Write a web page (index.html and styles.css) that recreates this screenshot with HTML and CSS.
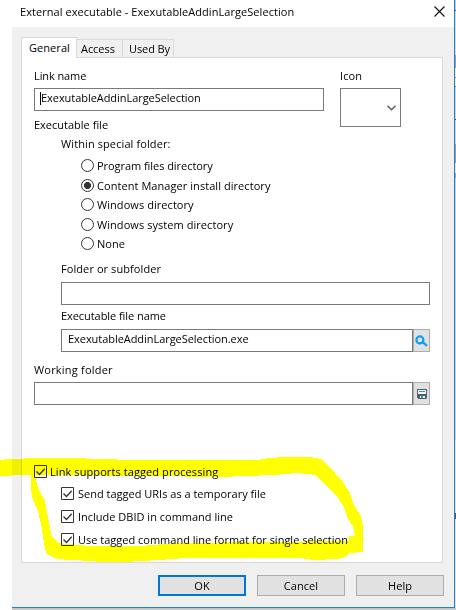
FILE: index.html
```html
<!DOCTYPE html>
<html lang="en">
<head>
<meta charset="utf-8">
<title>External executable</title>
<link rel="stylesheet" href="styles.css">
</head>
<body>
<div class="desktop">
  <main class="dialog">
    <header class="titlebar">
      <h1 class="title">External executable - ExexutableAddinLargeSelection</h1>
      <svg class="close" width="11" height="11" viewBox="0 0 11 11"><path d="M.5 .5l10 10M10.5 .5l-10 10"/></svg>
    </header>
    <div class="client">
      <nav class="tabs">
        <span class="tab tab-active">General</span>
        <span class="tab tab-access">Access</span>
        <span class="tab tab-used">Used By</span>
      </nav>
      <section class="panel">
        <div class="top-row">
          <div class="name-group">
            <div class="label">Link name</div>
            <div class="field"><span class="caret"></span><span class="value">ExexutableAddinLargeSelection</span></div>
          </div>
          <div class="icon-group">
            <div class="label">Icon</div>
            <div class="combo"><svg width="9" height="6" viewBox="0 0 9 6"><path d="M.5 .8l4 4 4-4"/></svg></div>
          </div>
        </div>
        <div class="label executable">Executable file</div>
        <div class="indent">
          <div class="label within">Within special folder:</div>
          <div class="radios">
            <div class="option tight"><i class="radio"></i><span>Program files directory</span></div>
            <div class="option"><i class="radio checked"></i><span>Content Manager install directory</span></div>
            <div class="option"><i class="radio"></i><span>Windows directory</span></div>
            <div class="option"><i class="radio"></i><span>Windows system directory</span></div>
            <div class="option"><i class="radio"></i><span>None</span></div>
          </div>
          <div class="label subfolder">Folder or subfolder</div>
          <div class="field"></div>
          <div class="label filename">Executable file name</div>
          <div class="field-row">
            <div class="field"><span class="value">ExexutableAddinLargeSelection.exe</span></div>
            <div class="browse"><svg width="13" height="12" viewBox="0 0 13 12"><circle class="lens" cx="4.9" cy="4.9" r="3.5"/><path class="handle" d="M7 7l2.2 1.4 2.8 2.4"/></svg></div>
          </div>
        </div>
        <div class="label working">Working folder</div>
        <div class="field-row">
          <div class="field"></div>
          <div class="browse"><svg width="10" height="10" viewBox="0 0 10 10"><path fill="#555c62" d="M0 0h10v9.5H9V10H1V9H0z"/><path fill="#f4f4f4" d="M1 1h8v4H1zM3 7h5v2H3z"/><path fill="#14a0dc" d="M2 2h6v1H2zM4 7h2v2H4z"/></svg></div>
        </div>
        <div class="checks">
          <div class="check main"><svg class="box" width="13" height="13" viewBox="0 0 13 13"><path d="M.5 .5h12v12H.5z"/><path class="tick" d="M2.5 6.5l3 3 5.2-5.8"/></svg><span>Link supports tagged processing</span></div>
          <div class="check"><svg class="box" width="13" height="13" viewBox="0 0 13 13"><path d="M.5 .5h12v12H.5z"/><path class="tick" d="M2.5 6.5l3 3 5.2-5.8"/></svg><span>Send tagged URIs as a temporary file</span></div>
          <div class="check"><svg class="box" width="13" height="13" viewBox="0 0 13 13"><path d="M.5 .5h12v12H.5z"/><path class="tick" d="M2.5 6.5l3 3 5.2-5.8"/></svg><span>Include DBID in command line</span></div>
          <div class="check"><svg class="box" width="13" height="13" viewBox="0 0 13 13"><path d="M.5 .5h12v12H.5z"/><path class="tick" d="M2.5 6.5l3 3 5.2-5.8"/></svg><span>Use tagged command line format for single selection</span></div>
        </div>
      </section>
      <footer class="actions">
        <div class="button default">OK</div>
        <div class="button">Cancel</div>
        <div class="button">Help</div>
      </footer>
    </div>
  </main>
  <svg class="marker" width="456" height="610" viewBox="0 0 456 610" shape-rendering="crispEdges">
    <path d="M0 460L8 459 24 459 24 458 87 458 87 459 118 459 118 460 257 460 269 458 284 457 310 457 321 459 335 473 343 482 350 493 354 505 361 516 363 527 363 552 350 553 345 557 338 559 314 560 300 558 185 558 160 560 124 562 96 562 96 561 67 560 54 558 46 553 44 543 42 529 38 511 33 500 31 490 31 475 24 475 0 476zM35 475L38 488 45 501 48 518 52 537 58 543 90 546 139 546 180 543 349 541 349 536 355 536 353 526 348 519 344 507 338 498 325 485 316 475 308 474 298 473 274 475 220 477 150 476 47 475z"/>
  </svg>
</div>
</body>
</html>
```
FILE: styles.css
```css
* { box-sizing: border-box; }
body {
  margin: 0;
  background: #fff;
  color: #000;
  font: 11px/16px "Open Sans", "Noto Sans", sans-serif;
  letter-spacing: .06px;
}
.desktop {
  position: relative;
  width: 456px;
  height: 610px;
  padding: 0 1px 2px 12px;
  overflow: hidden;
  background:
    linear-gradient(#fff, #fff) 0 0 / 12px 610px no-repeat,
    linear-gradient(#bdbdbd, #d4d4d4) 12px 608px / 444px 2px no-repeat,
    linear-gradient(#b0cfe8 0 10px, #45617b 10px 11px, #c8e0f3 11px 55px, #8b9fb2 55px 68px, #e4eff8 68px 77px, #708ca3 77px 78px, #e4eff8 78px 86px, #708ca3 86px 87px, #bfd9ed 87px 119px, #384d60 119px 120px, #bfd9ed 120px 144px, #8ca0b0 144px 163px, #e0edf7 163px 173px, #62b2e3 173px 178px, #b9d5ea 178px 440px, #d9e7f2 440px 513px, #4c5862 513px 519px, #d9e7f2 519px) 455px 0 / 1px 608px no-repeat;
}
.dialog {
  height: 608px;
  border-right: 1px solid #1883d7;
  border-bottom: 1px solid #1883d7;
  background: #f0f0f0;
}
.titlebar {
  display: flex;
  justify-content: space-between;
  height: 27px;
  padding: 4px 9px 0 8px;
  background: #fff;
}
.title { margin: 0; font-size: 11px; line-height: 16px; font-weight: 400; white-space: nowrap; }
.close { margin-top: 2px; fill: none; stroke: #111; stroke-width: 1.1; }
.client { padding: 10px 9px 0; }
.tabs { display: flex; align-items: flex-end; height: 20px; }
.tab { height: 18px; border: 1px solid #d9d9d9; border-bottom: 0; white-space: nowrap; }
.tab-active {
  z-index: 1;
  width: 56px;
  height: 21px;
  margin-bottom: -1px;
  padding: 2px 0 0 7px;
  background: #fff;
}
.tab-access { width: 45px; padding: 1px 0 0 4px; border-left: 0; border-right: 0; letter-spacing: -.05px; }
.tab-used { width: 52px; padding: 1px 0 0 6px; letter-spacing: -.1px; }
.panel {
  width: 422px;
  height: 506px;
  padding: 10px 12px 0;
  border: 1px solid #d9d9d9;
  background: #fff;
}
.label { height: 16px; white-space: nowrap; }
.top-row { display: flex; gap: 16px; height: 49px; }
.name-group { width: 290px; }
.name-group .label { letter-spacing: -.1px; }
.name-group .field, .combo { margin-top: 4px; }
.field {
  display: flex;
  flex: 1;
  height: 23px;
  padding: 1px 5px;
  border: 1px solid #7a7a7a;
  background: #fff;
}
.caret { width: 1px; height: 13px; margin-top: 2px; background: #000; }
.value { white-space: nowrap; letter-spacing: -.05px; }
.combo {
  display: flex;
  justify-content: flex-end;
  width: 61px;
  height: 39px;
  padding: 16px 4px 0 0;
  border: 1px solid #7a7a7a;
}
.combo svg { fill: none; stroke: #555; stroke-width: 1.3; }
.executable { letter-spacing: 0; }
.indent { padding-left: 27px; }
.indent > .field, .indent .field-row { width: 369px; }
.indent .value { padding-left: 1px; }
.within { margin-top: 3px; letter-spacing: .1px; }
.radios { display: grid; grid-template-rows: 20px 19px 20px 19px 19px; margin-top: 6px; padding-left: 20px; }
.option { display: flex; gap: 3px; height: 16px; white-space: nowrap; }
.option.tight { letter-spacing: -.05px; }
.radio {
  width: 13px;
  height: 13px;
  margin-top: 1px;
  border: 1px solid #333;
  border-radius: 50%;
  background: #fff;
}
.radio.checked { background: radial-gradient(circle, #333 3.2px, transparent 3.8px); }
.subfolder { margin-top: 6px; margin-bottom: 5px; letter-spacing: .08px; }
.filename { margin-top: 3px; margin-bottom: 5px; letter-spacing: -.06px; }
.field-row { display: flex; width: 396px; }
.browse {
  display: flex;
  align-items: center;
  justify-content: center;
  width: 17px;
  height: 23px;
  border: 1px solid #adadad;
  background: #e1e1e1;
}
.browse svg { flex: none; }
.lens { fill: none; stroke: #109ff0; stroke-width: 2.2; }
.handle { fill: none; stroke: #109ff0; stroke-width: 2.4; }
.working { margin-top: 10px; margin-bottom: 4px; letter-spacing: .2px; }
.checks { display: grid; grid-template-rows: 22px 23px 23px 16px; margin-top: 59px; letter-spacing: 0; }
.check { display: flex; gap: 4px; height: 16px; padding-left: 27px; white-space: nowrap; }
.check.main { gap: 3px; padding-left: 0; letter-spacing: .09px; }
.box { flex: none; margin-top: 1px; fill: #fff; stroke: #333; }
.tick { fill: none; stroke-width: 1.3; }
.actions { display: flex; gap: 11px; padding: 12px 0 0 137px; }
.button {
  width: 88px;
  height: 21px;
  border: 1px solid #adadad;
  background: #e1e1e1;
  line-height: 20px;
  text-align: center;
}
.button.default { border: 2px solid #0078d7; line-height: 18px; }
.marker {
  position: absolute;
  left: 0;
  top: 0;
  fill: #ff0;
  mix-blend-mode: multiply;
  pointer-events: none;
}
```
